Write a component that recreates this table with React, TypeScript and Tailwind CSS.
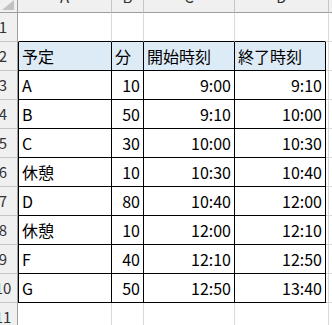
import React from "react";

type Kind = "top" | "head" | "table" | "after";

const rows: { n: number; kind: Kind; c: string[] }[] = [
  { n: 1, kind: "top", c: ["", "", "", ""] },
  { n: 2, kind: "head", c: ["予定", "分", "開始時刻", "終了時刻"] },
  { n: 3, kind: "table", c: ["A", "10", "9:00", "9:10"] },
  { n: 4, kind: "table", c: ["B", "50", "9:10", "10:00"] },
  { n: 5, kind: "table", c: ["C", "30", "10:00", "10:30"] },
  { n: 6, kind: "table", c: ["休憩", "10", "10:30", "10:40"] },
  { n: 7, kind: "table", c: ["D", "80", "10:40", "12:00"] },
  { n: 8, kind: "table", c: ["休憩", "10", "12:00", "12:10"] },
  { n: 9, kind: "table", c: ["F", "40", "12:10", "12:50"] },
  { n: 10, kind: "table", c: ["G", "50", "12:50", "13:40"] },
  { n: 11, kind: "after", c: ["", "", "", ""] },
];

const widths = ["w-[94px]", "w-[32px]", "w-[91px]", "w-[91px]"];

function cellBorder(kind: Kind, i: number): string {
  if (kind === "head" || kind === "table") {
    return i === 0
      ? "border-l border-r border-b border-black"
      : "border-r border-b border-black";
  }
  const bottom = kind === "top" ? "border-b border-b-black" : "border-b border-b-[#dadada]";
  if (i === 0) return `border-l border-l-transparent border-r border-r-[#dadada] ${bottom}`;
  if (i === 3) return `border-r border-r-transparent ${bottom}`;
  return `border-r border-r-[#dadada] ${bottom}`;
}

function Row({ n, kind, c }: { n: number; kind: Kind; c: string[] }) {
  const bg = kind === "head" ? "bg-[#ddebf7]" : "bg-white";
  return (
    <div className={`flex shrink-0 ${n === 1 ? "h-[29px]" : "h-[29px]"}`}>
      <div className="w-[18px] shrink-0 border-r border-b border-r-[#9e9e9e] border-b-[#c6c6c6] bg-[#f0f0f0] overflow-hidden flex items-center">
        <div className="w-[30px] -ml-[12px] shrink-0 text-center text-[15px] text-[#333]">{n}</div>
      </div>
      {c.map((t, i) => {
        const right = kind === "table" && i > 0;
        return (
          <div
            key={i}
            className={`${widths[i]} shrink-0 ${cellBorder(kind, i)} ${bg} flex items-center px-[3px] pb-[1px] text-[16px] text-black whitespace-nowrap overflow-hidden ${right ? "justify-end" : "justify-start"}`}
          >
            {t}
          </div>
        );
      })}
      <div className="w-[3px] shrink-0 border-r border-b border-[#dadada]" />
      <div className="flex-1 border-b border-[#dadada]" />
    </div>
  );
}

function ColHead({ w, label, last }: { w: string; label: string; last?: boolean }) {
  return (
    <div
      className={`${w} shrink-0 h-full border-b border-b-[#9e9e9e] ${last ? "border-r border-r-[#c6c6c6]" : "border-r border-r-[#c6c6c6]"} bg-[#f0f0f0] overflow-hidden flex justify-center`}
    >
      <span className="-mt-[13px] text-[15px] leading-[20px] text-[#333]">{label}</span>
    </div>
  );
}

export default function App() {
  return (
    <div className="w-[332px] h-[325px] overflow-hidden bg-white font-['Noto_Sans_CJK_JP','Noto_Sans',sans-serif]">
      <div className="flex h-[13px]">
        <div className="w-[18px] shrink-0 h-full border-r border-b border-[#9e9e9e] bg-[#f0f0f0]">
          <svg width="17" height="12" viewBox="0 0 17 12" className="block">
            <polygon points="14,0 14,10 2,10" fill="#c2c2c2" />
          </svg>
        </div>
        <ColHead w="w-[94px]" label="A" />
        <ColHead w="w-[32px]" label="B" />
        <ColHead w="w-[91px]" label="C" />
        <ColHead w="w-[94px]" label="D" last />
        <div className="flex-1 h-full border-b border-b-[#9e9e9e] bg-[#f0f0f0]" />
      </div>
      {rows.map((r) => (
        <Row key={r.n} n={r.n} kind={r.kind} c={r.c} />
      ))}
    </div>
  );
}
